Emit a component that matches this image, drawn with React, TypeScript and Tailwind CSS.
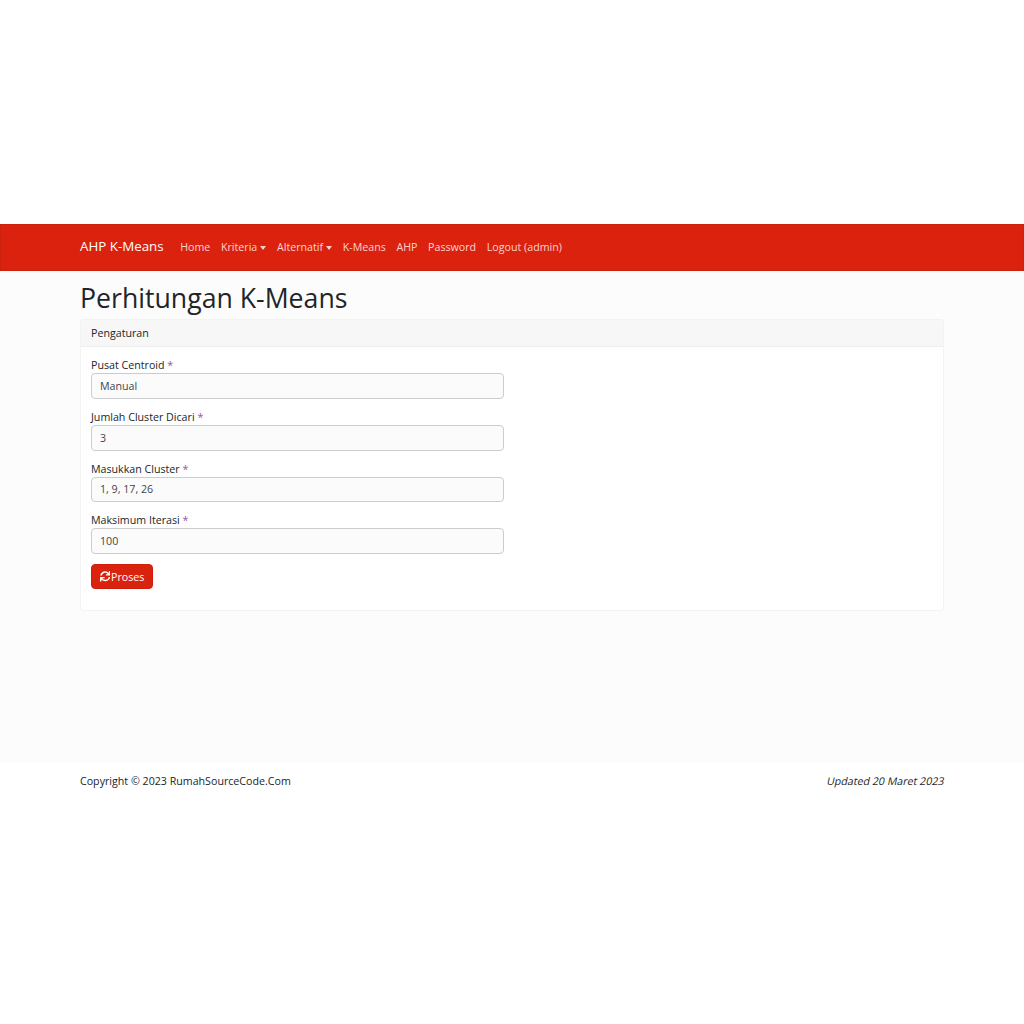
import { FaSync } from "react-icons/fa";

const fields = [
  { label: "Pusat Centroid", value: "Manual" },
  { label: "Jumlah Cluster Dicari", value: "3" },
  { label: "Masukkan Cluster", value: "1, 9, 17, 26" },
  { label: "Maksimum Iterasi", value: "100" },
];

function Caret() {
  return <span className="ml-[3px] inline-block border-x-[3.5px] border-t-[4px] border-x-transparent border-t-current align-[1.5px]" />;
}

export default function App() {
  return (
    <div className="min-h-[1024px] bg-white pt-[224px] font-['Open_Sans',sans-serif] text-[10.67px] text-[#212529]">
      <nav className="flex h-[47px] items-center border border-[#c9230f] bg-[#da220e] pb-px pl-[79px]">
        <span className="mr-[16.6px] text-[13.33px] text-white">AHP K-Means</span>
        <div className="flex gap-[10.67px] text-[#fbd3cd]">
          <span>Home</span>
          <span>Kriteria<Caret /></span>
          <span>Alternatif<Caret /></span>
          <span>K-Means</span>
          <span>AHP</span>
          <span>Password</span>
          <span>Logout (admin)</span>
        </div>
      </nav>

      <main className="h-[492px] bg-[#fcfcfc] px-[80px] pt-[8px]">
        <h1 className="mb-[3px] text-[26.67px] leading-[37px]">Perhitungan K-Means</h1>
        <section className="h-[292px] w-[864px] rounded-[3px] border border-[#f3f3f3] bg-white">
          <div className="flex h-[27px] items-center border-b border-[#eeeeee] bg-[#f7f7f7] px-[10px]">Pengaturan</div>
          <div className="flex flex-col px-[10px] pt-[10px]">
            {fields.map((field) => (
              <div key={field.label} className="mb-[10px]">
                <label className="block h-[16px] leading-[16px]">
                  {field.label} <span className="text-[#9b4fa8]">*</span>
                </label>
                <div className="flex h-[25.75px] w-[413px] items-center rounded-[4px] border border-[#cccccc] bg-[#fbfbfb] px-[8px] text-[#3f464c]">
                  {field.value}
                </div>
              </div>
            ))}
            <button className="flex h-[25px] w-[62px] items-center justify-center gap-px rounded-[4px] border border-[#d0200d] bg-[#d9230f] text-white">
              <FaSync className="size-[10.5px]" />
              Proses
            </button>
          </div>
        </section>
      </main>

      <footer className="flex justify-between pl-[80px] pr-[79px] pt-[10px] text-[#212529]">
        <span>Copyright © 2023 RumahSourceCode.Com</span>
        <span className="inline-block -skew-x-12">Updated 20 Maret 2023</span>
      </footer>
    </div>
  );
}
